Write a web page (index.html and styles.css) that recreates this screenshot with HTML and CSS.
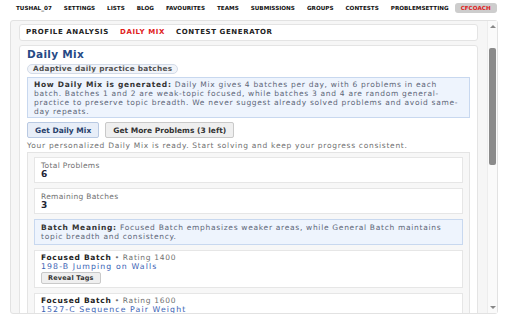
FILE: index.html
```html
<!DOCTYPE html>
<html lang="en">

<head>
    <meta charset="UTF-8">
    <meta name="viewport" content="width=device-width, initial-scale=1.0">
    <title>CF Coach</title>
    <link rel="stylesheet" href="styles.css">
</head>

<body>
    <header>
        <nav class="topnav">
            <a href="#">TUSHAL_07</a>
            <a href="#">SETTINGS</a>
            <a href="#">LISTS</a>
            <a href="#">BLOG</a>
            <a href="#">FAVOURITES</a>
            <a href="#">TEAMS</a>
            <a href="#">SUBMISSIONS</a>
            <a href="#">GROUPS</a>
            <a href="#">CONTESTS</a>
            <a href="#">PROBLEMSETTING</a>
            <a href="#" class="coach">CFCOACH</a>
        </nav>
    </header>
    <main class="panel">
        <div class="scroll-area">
            <div class="tabs">
                <a href="#">PROFILE ANALYSIS</a>
                <a href="#" class="active">DAILY MIX</a>
                <a href="#">CONTEST GENERATOR</a>
            </div>

            <section class="card">
                <h1>Daily Mix</h1>
                <span class="pill">Adaptive daily practice batches</span>

                <div class="info">
                    <b>How Daily Mix is generated:</b> Daily Mix gives 4 batches per day, with 6 problems in each batch. Batches 1 and 2 are weak-topic focused, while batches 3 and 4 are random general-practice to preserve topic breadth. We never suggest already solved problems and avoid same-day repeats.
                </div>

                <div class="actions">
                    <button class="btn primary">Get Daily Mix</button>
                    <button class="btn">Get More Problems (3 left)</button>
                </div>

                <p class="status">Your personalized Daily Mix is ready. Start solving and keep your progress consistent.</p>

                <div class="result">
                    <div class="stat">
                        <span class="label">Total Problems</span>
                        <span class="value">6</span>
                    </div>
                    <div class="stat">
                        <span class="label">Remaining Batches</span>
                        <span class="value">3</span>
                    </div>

                    <div class="info small">
                        <b>Batch Meaning:</b> Focused Batch emphasizes weaker areas, while General Batch maintains topic breadth and consistency.
                    </div>

                    <div class="problem">
                        <div><b>Focused Batch</b> &bull; Rating 1400</div>
                        <a href="#">198-B Jumping on Walls</a>
                        <button class="btn tiny">Reveal Tags</button>
                    </div>
                    <div class="problem">
                        <div><b>Focused Batch</b> &bull; Rating 1600</div>
                        <a href="#">1527-C Sequence Pair Weight</a>
                        <button class="btn tiny">Reveal Tags</button>
                    </div>
                    <div class="problem">
                        <div><b>Focused Batch</b> &bull; Rating 1500</div>
                        <a href="#">1366-C Palindromic Paths</a>
                        <button class="btn tiny">Reveal Tags</button>
                    </div>
                </div>
            </section>
        </div>

        <!-- scrollbar of the panel -->
        <div class="scrollbar">
            <span class="arrow up"></span>
            <div class="track"><span class="thumb"></span></div>
            <span class="arrow down"></span>
        </div>
    </main>
</body>

</html>
```

FILE: styles.css
```css
body {
    margin: 0;
    font-family: "DejaVu Sans", Verdana, sans-serif;
    font-size: 7.5px;
    letter-spacing: 0.7px;
    color: #707070;
    background: #fff;
}

a {
    text-decoration: none;
}

/* top navigation */
.topnav {
    display: flex;
    align-items: center;
    gap: 12px;
    height: 16px;
    padding: 0 0 0 16px;
    letter-spacing: 0;
}
.topnav a {
    color: #111;
    font-weight: bold;
    font-size: 5.65px;
}
.topnav a.coach {
    color: #e0201b;
    background: #cdcdcd;
    border-radius: 3px;
    padding: 2px 6px;
    margin-left: -6px;
}

/* panel */
.panel {
    display: flex;
    margin: 4px 0 0 10px;
    width: 488px;
    height: 294px;
    box-sizing: border-box;
    background: #f6f6f6;
    border: 1px solid #e2e2e2;
    border-radius: 3px;
}
.scroll-area {
    flex: 1;
    overflow: hidden;
    padding: 3px 9px 0 8px;
}

.scrollbar {
    width: 10px;
    display: flex;
    flex-direction: column;
    align-items: center;
    background: #fafafa;
    border-left: 1px solid #ededed;
    box-sizing: border-box;
}
.arrow {
    width: 0;
    height: 0;
    border-left: 3px solid transparent;
    border-right: 3px solid transparent;
}
.arrow.up {
    margin: 4px 0 3px;
    border-bottom: 3px solid #888;
}
.arrow.down {
    margin: 3px 0 4px;
    border-top: 3px solid #888;
}
.track {
    flex: 1;
    width: 100%;
    display: flex;
    justify-content: center;
}
.thumb {
    width: 7px;
    height: 117px;
    margin-top: 17px;
    background: #8b8b8b;
    border-radius: 2px;
}

/* tabs */
.tabs {
    display: flex;
    gap: 11px;
    background: #fff;
    border: 1px solid #e4e4e4;
    border-radius: 3px;
    padding: 3px 6px;
    line-height: 9px;
    letter-spacing: 0.6px;
}
.tabs a {
    color: #222;
    font-weight: bold;
    font-size: 7px;
}
.tabs a.active {
    color: #e0201b;
}

/* main card */
.card {
    background: #fff;
    border: 1px solid #e4e4e4;
    border-radius: 3px;
    margin-top: 4px;
    padding: 2px 7px 8px;
}
.card h1 {
    margin: 0 0 4px;
    font-size: 10.5px;
    line-height: 12px;
    letter-spacing: 0.3px;
    color: #264a86;
}
.pill {
    display: inline-block;
    background: #f1f4f9;
    border: 1px solid #d3dbe8;
    border-radius: 8px;
    padding: 0 5px;
    line-height: 8px;
    font-weight: bold;
    color: #505050;
    font-size: 7.3px;
    letter-spacing: 0.3px;
}

.info {
    margin-top: 3px;
    background: #eef4fd;
    border: 1px solid #c8d8ef;
    padding: 2px 6px 1px;
    line-height: 9px;
    color: #5d6678;
}
.info b {
    color: #333;
}

.actions {
    display: flex;
    gap: 6px;
    margin-top: 4px;
}
.btn {
    font-family: "DejaVu Sans", Verdana, sans-serif;
    font-size: 7.5px;
    font-weight: bold;
    color: #333;
    background: #efefef;
    border: 1px solid #c9c9c9;
    border-radius: 2px;
    height: 16px;
    padding: 0 7px;
}
.btn.primary {
    background: #e8eef8;
    border-color: #b9c9e2;
    color: #27406b;
}
.btn.tiny {
    display: block;
    font-size: 6.5px;
    letter-spacing: 0.2px;
    height: 12px;
    padding: 0 6px;
    margin-top: 1px;
    color: #333;
}

.status {
    margin: 3px 0 0;
    line-height: 9px;
}

.result {
    display: flex;
    flex-direction: column;
    gap: 5px;
    margin-top: 2px;
    background: #f7f7f7;
    border: 1px solid #e4e4e4;
    padding: 4px 6px 7px;
}
.stat {
    display: flex;
    flex-direction: column;
    background: #fff;
    border: 1px solid #e6e6e6;
    padding: 3px 6px 3px;
}
.stat .label {
    font-size: 7.5px;
    letter-spacing: 0.3px;
    line-height: 9px;
    color: #707070;
}
.stat .value {
    font-size: 9px;
    line-height: 9px;
    font-weight: bold;
    color: #223;
}
.result .info.small {
    margin-top: 0;
    padding: 3px 6px 3px;
}

.problem {
    background: #fff;
    border: 1px solid #e6e6e6;
    padding: 2px 6px 3px;
    line-height: 9px;
    color: #707070;
}
.problem b {
    color: #222;
}
.problem a {
    font-size: 7.8px;
    letter-spacing: 1.1px;
    color: #3a62b4;
}
```
